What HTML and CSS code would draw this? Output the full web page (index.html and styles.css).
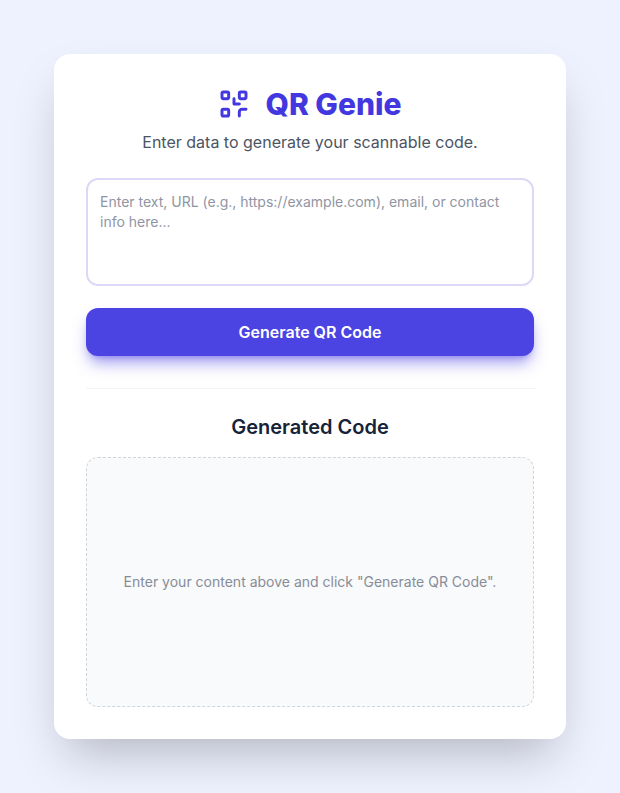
FILE: index.html
```html
<!DOCTYPE html>
<html lang="en">
<head>
<meta charset="utf-8">
<title>QR Genie</title>
<link rel="stylesheet" href="styles.css">
</head>
<body>
<main class="card">
  <header class="head">
    <h1 class="title">
      <svg class="logo" viewBox="0 0 24 24" fill="none" stroke="currentColor" stroke-width="2.2" stroke-linecap="round" stroke-linejoin="round">
        <rect x="3" y="3" width="5" height="5" rx="1"/>
        <rect x="16" y="3" width="5" height="5" rx="1"/>
        <rect x="3" y="16" width="5" height="5" rx="1"/>
        <path d="M21 16h-3a2 2 0 0 0-2 2v3"/>
        <path d="M12 8v4h4"/>
      </svg>
      <span>QR Genie</span>
    </h1>
    <p class="sub">Enter data to generate your scannable code.</p>
  </header>
  <textarea class="input" rows="4" placeholder="Enter text, URL (e.g., https://example.com), email, or contact info here..."></textarea>
  <button class="btn" type="button">Generate QR Code</button>
  <hr class="rule">
  <section class="result">
    <h2 class="result-title">Generated Code</h2>
    <div class="placeholder"><p>Enter your content above and click "Generate QR Code".</p></div>
  </section>
</main>
</body>
</html>
```

FILE: styles.css
```css
* { box-sizing: border-box; }
html, body { height: 100%; }
body {
  margin: 0;
  padding: 54px 54px;
  background: #eef2ff;
  font-family: Inter, "Liberation Sans", sans-serif;
  overflow: hidden;
}
.card {
  width: 512px;
  height: 685px;
  padding: 32px;
  background: #fff;
  border-radius: 16px;
  box-shadow: 0 25px 50px -12px rgba(0,0,0,.25);
}
.head { text-align: center; margin-bottom: 24px; }
.title {
  display: flex;
  align-items: center;
  justify-content: center;
  gap: 15px;
  margin: 0;
  height: 36px;
  font-size: 30px;
  line-height: 36px;
  font-weight: 800;
  color: #4338e0;
}
.logo { width: 32px; height: 32px; color: #4338e0; }
.sub { margin: 8px 0 0; font-size: 16px; line-height: 24px; color: #4b5563; }
.input {
  display: block;
  width: 100%;
  height: 108px;
  padding: 12px;
  border: 2px solid #dcd9f8;
  border-radius: 12px;
  font: 400 14px/20px Inter, sans-serif;
  color: #111827;
  resize: none;
  outline: none;
}
.input::placeholder { color: #8f95a3; opacity: 1; }
.btn {
  display: block;
  width: 100%;
  height: 48px;
  margin-top: 22px;
  border: 0;
  border-radius: 12px;
  background: #4c43e3;
  color: #fff;
  font: 600 16px/24px Inter, sans-serif;
  box-shadow: 0 10px 15px -3px rgba(79,70,229,.5), 0 4px 6px -4px rgba(79,70,229,.5);
}
.rule { height: 1px; margin: 32px -2px 0 0; border: 0; background: #f3f4f6; }
.result { padding-top: 24px; }
.result-title {
  margin: 0 0 16px;
  text-align: center;
  font-size: 20px;
  line-height: 28px;
  font-weight: 600;
  color: #172338;
}
.placeholder {
  display: flex;
  align-items: center;
  justify-content: center;
  height: 250px;
  border: 1px dashed #d1d5db;
  border-radius: 12px;
  background: #f9fafb;
}
.placeholder p { margin: 0; font-size: 14px; line-height: 20px; color: #6b7280; opacity: .8; }
```
